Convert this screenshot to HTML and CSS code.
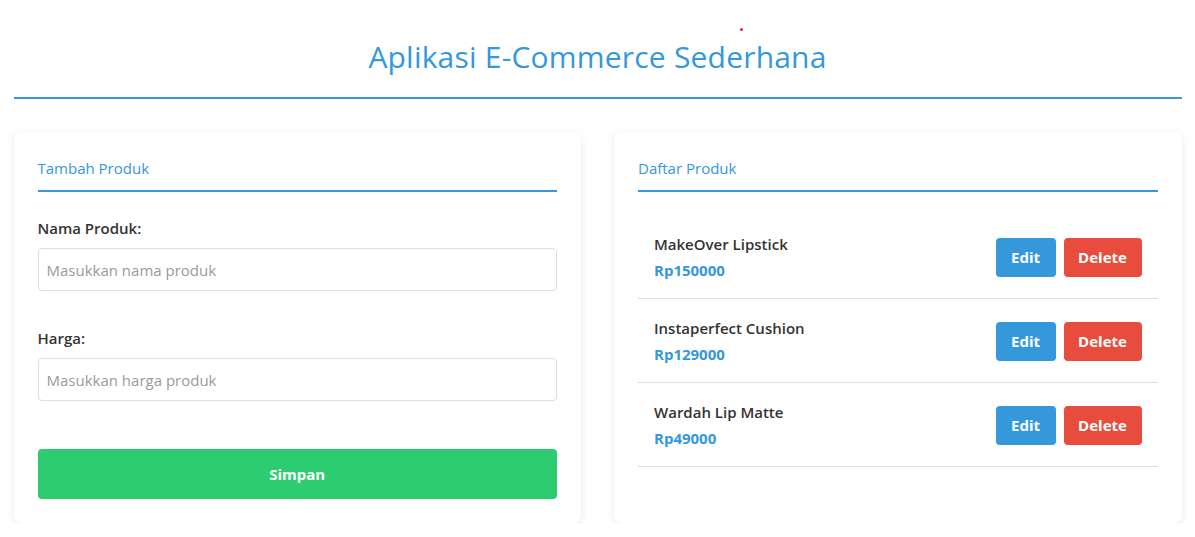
FILE: index.html
```html
<!DOCTYPE html>
<html lang="id">
<head>
<meta charset="utf-8">
<title>Aplikasi E-Commerce Sederhana</title>
<link rel="stylesheet" href="styles.css">
</head>
<body>
<span class="dot"></span>
<div class="app">
  <header class="header">
    <h1 class="title">Aplikasi E-Commerce Sederhana</h1>
  </header>
  <main class="grid">
    <section class="card">
      <h2 class="card-title">Tambah Produk</h2>
      <form class="form">
        <div class="group">
          <label class="label">Nama Produk:</label>
          <input class="input" type="text" placeholder="Masukkan nama produk">
        </div>
        <div class="group">
          <label class="label">Harga:</label>
          <input class="input" type="text" placeholder="Masukkan harga produk">
        </div>
        <button class="btn btn-save" type="button">Simpan</button>
      </form>
    </section>
    <section class="card">
      <h2 class="card-title">Daftar Produk</h2>
      <ul class="list">
        <li class="item">
          <div class="info">
            <div class="name">MakeOver Lipstick</div>
            <div class="price">Rp150000</div>
          </div>
          <div class="actions">
            <button class="btn btn-edit" type="button">Edit</button>
            <button class="btn btn-delete" type="button">Delete</button>
          </div>
        </li>
        <li class="item">
          <div class="info">
            <div class="name">Instaperfect Cushion</div>
            <div class="price">Rp129000</div>
          </div>
          <div class="actions">
            <button class="btn btn-edit" type="button">Edit</button>
            <button class="btn btn-delete" type="button">Delete</button>
          </div>
        </li>
        <li class="item">
          <div class="info">
            <div class="name">Wardah Lip Matte</div>
            <div class="price">Rp49000</div>
          </div>
          <div class="actions">
            <button class="btn btn-edit" type="button">Edit</button>
            <button class="btn btn-delete" type="button">Delete</button>
          </div>
        </li>
      </ul>
    </section>
  </main>
</div>
</body>
</html>
```
FILE: styles.css
```css
* { box-sizing: border-box; }
html, body { margin: 0; padding: 0; background: #ffffff; }
body {
  font-family: "Open Sans", "Noto Sans", sans-serif;
  color: #333333;
  font-size: 16px;
  position: relative;
}
.dot {
  position: absolute;
  left: 740px;
  top: 28px;
  width: 3px;
  height: 3px;
  border-radius: 50%;
  background: #e0242a;
}
.app {
  width: 1168px;
  margin: 0 auto;
}
.header {
  padding-top: 37px;
  padding-bottom: 20px;
  border-bottom: 2px solid #3498db;
  text-align: center;
}
.title {
  margin: 0;
  font-size: 30px;
  line-height: 40px;
  font-weight: 400;
  letter-spacing: 0.2px;
  color: #3498db;
}
.grid {
  display: grid;
  grid-template-columns: 1fr 1fr;
  gap: 33px;
  margin-top: 33px;
}
.card {
  background: #ffffff;
  border-radius: 8px;
  box-shadow: 0 2px 10px rgba(0, 0, 0, 0.09);
  padding: 24px;
}
.card-title {
  margin: 0 0 23px;
  font-size: 15px;
  line-height: 24px;
  font-weight: 400;
  color: #3498db;
  padding-bottom: 10px;
  border-bottom: 2px solid #3498db;
}
.group { margin-bottom: 34px; }
.label {
  display: block;
  font-size: 15px;
  font-weight: 600;
  line-height: 24px;
  padding-top: 1px;
  margin-bottom: 8px;
  color: #333333;
}
.input {
  display: block;
  width: 100%;
  height: 43px;
  padding: 0 8px;
  border: 1px solid #dddddd;
  border-radius: 4px;
  font-family: inherit;
  font-size: 15px;
  color: #333333;
  background: #ffffff;
}
.input::placeholder { color: #9a9a9a; }
.btn {
  border: 0;
  border-radius: 4px;
  color: #ffffff;
  font-family: inherit;
  font-weight: 700;
  font-size: 15px;
  cursor: pointer;
}
.btn-save {
  display: block;
  width: 100%;
  height: 50px;
  margin-top: 48px;
  background: #2ecc71;
}
.list {
  list-style: none;
  margin: 0;
  padding: 0;
}
.item {
  display: flex;
  align-items: center;
  justify-content: space-between;
  padding: 16px 16px 15px;
  border-bottom: 1px solid #dddddd;
}
.name {
  font-size: 15px;
  font-weight: 600;
  line-height: 25px;
  padding-top: 1px;
  color: #333333;
}
.price {
  font-size: 15px;
  font-weight: 700;
  line-height: 26px;
  color: #3498db;
}
.actions {
  display: flex;
  gap: 8px;
}
.btn-edit, .btn-delete {
  height: 39px;
  padding: 0;
}
.btn-edit { background: #3498db; width: 60px; }
.btn-delete { background: #e74c3c; width: 78px; }
```
